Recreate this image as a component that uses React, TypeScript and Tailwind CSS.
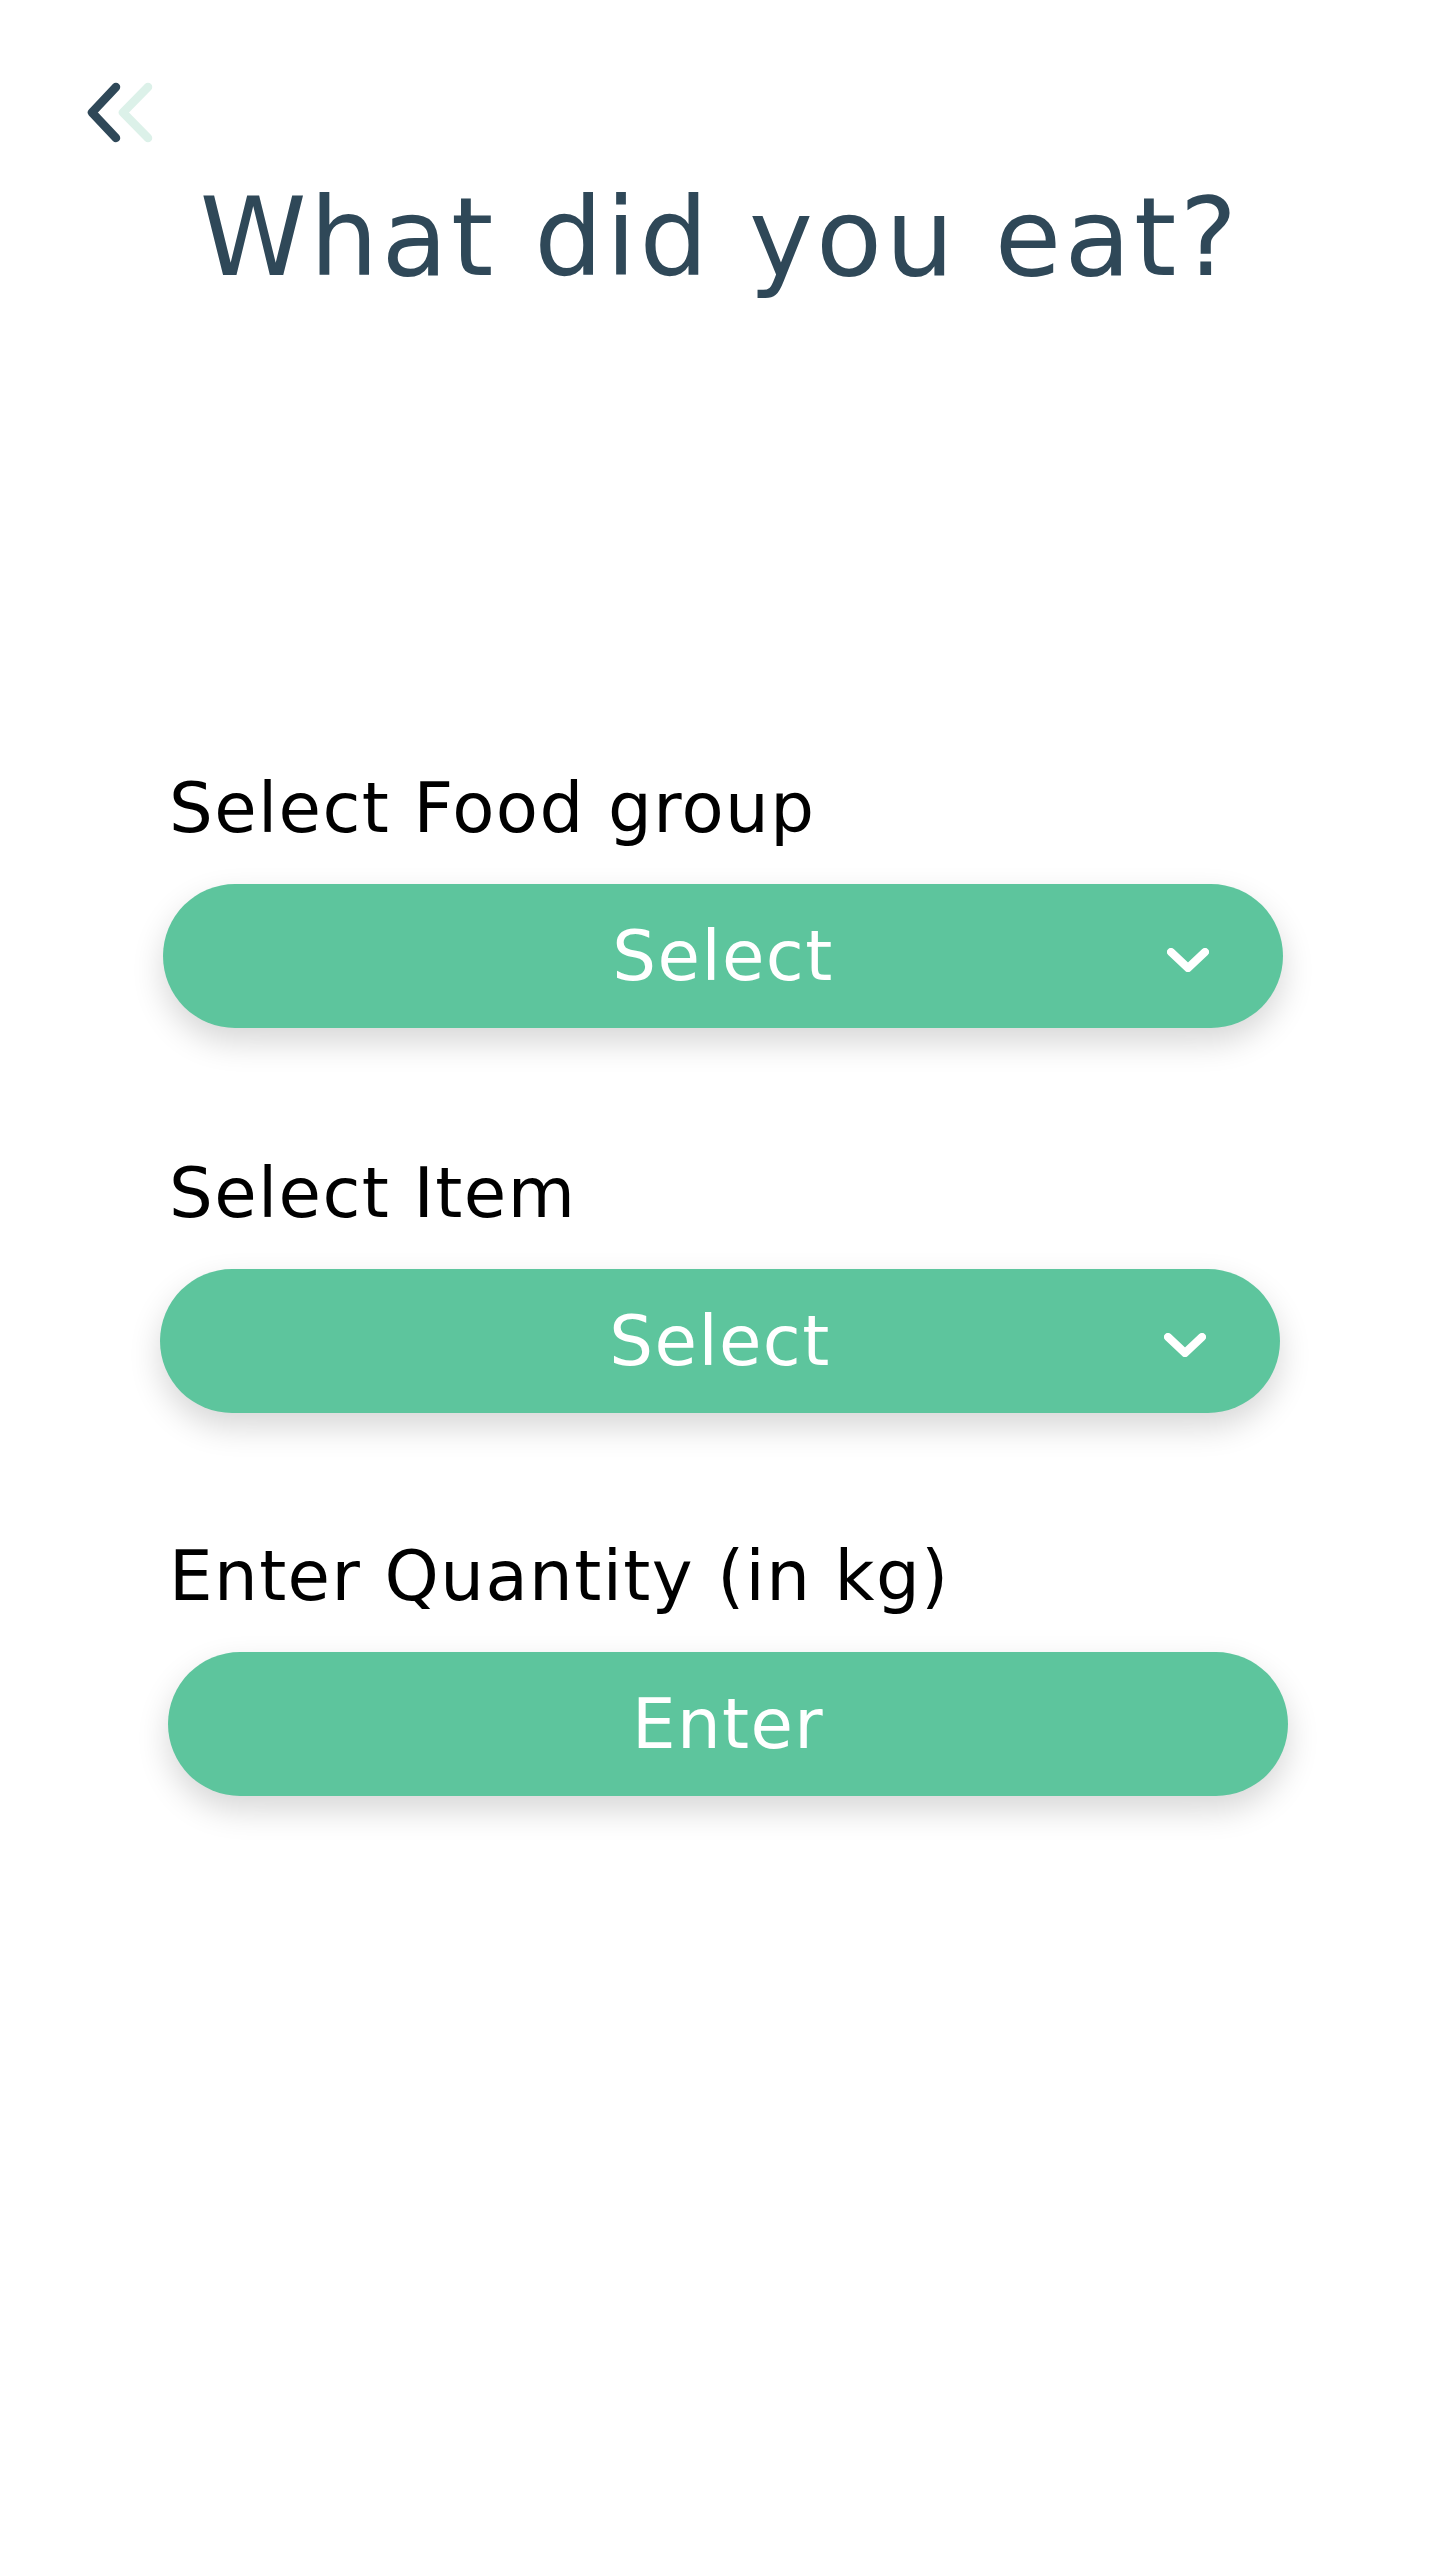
import React from 'react';

function Chevron() {
  return (
    <svg
      className="absolute right-[74px] top-[64px]"
      width="42"
      height="24"
      viewBox="0 0 42 24"
      fill="none"
      stroke="#ffffff"
      strokeWidth="8"
      strokeLinecap="round"
      strokeLinejoin="round"
    >
      <path d="M4 4 L21 20 L38 4" />
    </svg>
  );
}

function Field({
  label,
  value,
  dropdown,
  offset,
  labelTop,
}: {
  label: string;
  value: string;
  dropdown?: boolean;
  offset: string;
  labelTop: string;
}) {
  return (
    <div className={labelTop}>
      <div className="pl-[169px] text-[69px] leading-none tracking-[1.4px] text-black">
        {label}
      </div>
      <div
        className={`${offset} relative mt-[41px] w-[1120px] h-[144px] rounded-full bg-[#5dc59d] shadow-[0_14px_32px_rgba(0,0,0,0.16)] flex items-center justify-center`}
      >
        <span className="text-[69px] leading-none tracking-[1.4px] text-white">{value}</span>
        {dropdown && <Chevron />}
      </div>
    </div>
  );
}

export default function App() {
  return (
    <div
      className="w-[1440px] h-[2560px] bg-white"
      style={{ fontFamily: '"DejaVu Sans", "Liberation Sans", sans-serif' }}
    >
      {/* Back */}
      <div className="pt-[78px] pl-[80px]">
        <svg
          width="80"
          height="70"
          viewBox="0 0 80 70"
          fill="none"
          strokeWidth="8.5"
          strokeLinecap="round"
          strokeLinejoin="round"
        >
          <path d="M68 9 L43 34.5 L68 60" stroke="#dcf1e9" />
          <path d="M36 9 L12 34.5 L36 60" stroke="#2f4858" />
        </svg>
      </div>

      {/* Title */}
      <h1 className="mt-[36px] text-center text-[108px] leading-none tracking-[3.3px] text-[#2f4858]">
        What did you eat?
      </h1>

      <Field label="Select Food group" value="Select" dropdown offset="ml-[163px]" labelTop="mt-[482px]" />
      <Field label="Select Item" value="Select" dropdown offset="ml-[160px]" labelTop="mt-[131px]" />
      <Field label="Enter Quantity (in kg)" value="Enter" offset="ml-[168px]" labelTop="mt-[129px]" />
    </div>
  );
}
